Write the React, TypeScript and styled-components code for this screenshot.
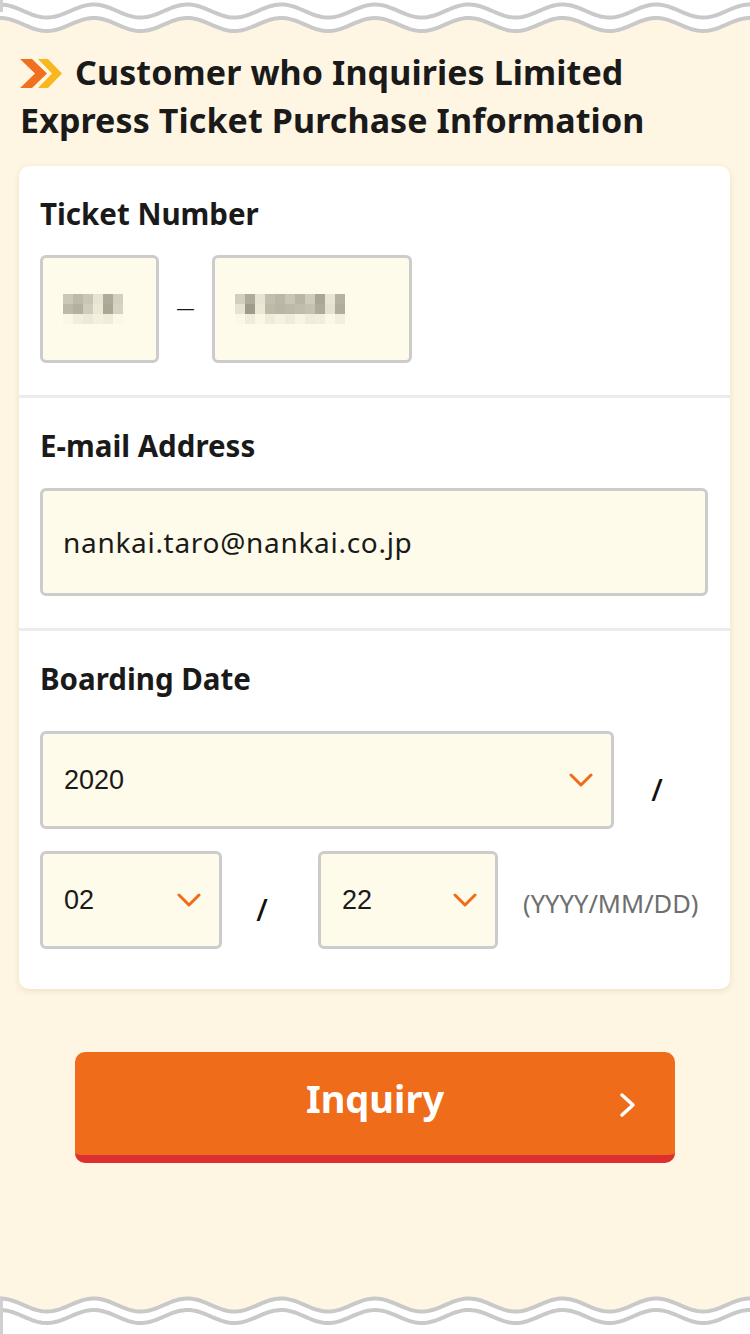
import React from 'react'
import styled, { createGlobalStyle } from 'styled-components'

const CREAM = '#fef6e3'
const ORANGE = '#ee6c1a'
const LINE = '#c9c9c9'

const GlobalStyle = createGlobalStyle`
  html, body {
    margin: 0;
    padding: 0;
    background: ${CREAM};
  }
  body {
    font-family: "Noto Sans", "Noto Sans CJK JP", sans-serif;
    color: #1a1a1a;
  }
`

const Page = styled.div`
  min-height: 1334px;
  display: flex;
  flex-direction: column;
  background: ${CREAM};
`

const WaveSvg = styled.svg<{ $bottom?: boolean }>`
  display: block;
  width: 750px;
  flex-shrink: 0;
  margin-top: ${(p) => (p.$bottom ? 'auto' : '0')};
`

const Title = styled.h1`
  margin: 12px 20px 0 20px;
  font-size: 34px;
  font-weight: 700;
  line-height: 48px;
  letter-spacing: 0.1px;
  color: #1a1a1a;
`

const TitleMark = styled.svg`
  display: inline-block;
  width: 42px;
  height: 29px;
  margin-right: 13px;
  vertical-align: -3px;
`

const Card = styled.div`
  margin: 22px 20px 0 19px;
  background: #fff;
  border-radius: 10px;
  box-shadow: 0 2px 6px rgba(190, 160, 100, 0.25);
`

const Section = styled.div<{ $last?: boolean }>`
  padding: 33px 22px ${(p) => (p.$last ? '40px' : '32px')} 21px;
  border-bottom: ${(p) => (p.$last ? 'none' : '3px solid #ececec')};
`

const Label = styled.div<{ $gap?: number }>`
  font-size: 29.5px;
  font-weight: 700;
  line-height: 30px;
  margin-bottom: ${(p) => p.$gap ?? 26}px;
`

const Row = styled.div<{ $gap?: number }>`
  display: flex;
  align-items: center;
  margin-top: ${(p) => p.$gap ?? 0}px;
`

const Field = styled.div<{ $w?: number; $h?: number }>`
  box-sizing: border-box;
  width: ${(p) => (p.$w ? `${p.$w}px` : '100%')};
  height: ${(p) => p.$h ?? 108}px;
  background: #fffbea;
  border: 3px solid #cccccc;
  border-radius: 6px;
  display: flex;
  align-items: center;
  padding: 0 18px 0 20px;
  flex-shrink: 0;
`

const FieldText = styled.span`
  font-size: 28px;
  color: #1a1a1a;
  letter-spacing: 0.7px;
`

const SelectText = styled.span`
  flex: 1;
  font-family: "Liberation Sans", Arial, sans-serif;
  font-size: 27px;
  color: #1a1a1a;
`

const Dash = styled.span`
  width: 53px;
  text-align: center;
  font-family: "Liberation Sans", Arial, sans-serif;
  font-size: 17px;
  color: #1a1a1a;
`

const Slash = styled.span<{ $w: number; $shift?: number }>`
  width: ${(p) => p.$w}px;
  text-align: center;
  padding-top: 18px;
  padding-right: ${(p) => p.$shift ?? 0}px;
  box-sizing: border-box;
  font-size: 30px;
  font-weight: 500;
  color: #111;
  flex-shrink: 0;
`

const Hint = styled.span`
  margin-left: 25px;
  padding-top: 6px;
  font-size: 25.5px;
  color: #6e6e6e;
  white-space: nowrap;
`

const Chevron = styled.svg`
  width: 24px;
  height: 14px;
  flex-shrink: 0;
`

const Button = styled.button`
  box-sizing: border-box;
  display: grid;
  grid-template-columns: 1fr auto 1fr;
  align-items: center;
  width: 600px;
  height: 111px;
  margin: 63px auto 0 auto;
  padding: 0 38px 12px 38px;
  background: ${ORANGE};
  border: none;
  border-bottom: 8px solid #dd2f2f;
  border-radius: 10px;
  color: #fff;
  font-family: "Noto Sans", sans-serif;
  font-size: 38px;
  font-weight: 700;
  cursor: pointer;
`

const ButtonArrow = styled.svg`
  justify-self: end;
  width: 18px;
  height: 26px;
  margin-top: 14px;
`

const wavePath = (c: number, a: number) => {
  const pts: string[] = []
  for (let x = -2; x <= 752; x += 2) {
    const y = c - a * Math.cos((2 * Math.PI * x) / 93.75)
    pts.push(`${x},${y.toFixed(2)}`)
  }
  return pts
}

const TopWave = () => {
  const l1 = wavePath(11, 6.5)
  const l2 = wavePath(24.5, 6.5)
  return (
    <WaveSvg viewBox="0 0 750 36" height={36}>
      <rect x={0} y={0} width={750} height={36} fill="#fff" />
      <path d={`M${l2.join(' L')} L752,36 L-2,36 Z`} fill={CREAM} />
      <path d={`M${l1.join(' L')}`} fill="none" stroke={LINE} strokeWidth={4} />
      <path d={`M${l2.join(' L')}`} fill="none" stroke={LINE} strokeWidth={4} />
      <rect x={0} y={0} width={3} height={12} fill="#d0d0d0" />
    </WaveSvg>
  )
}

const BottomWave = () => {
  const l1 = wavePath(15, 6.5)
  const l2 = wavePath(26.5, 6.5)
  return (
    <WaveSvg $bottom viewBox="0 0 750 44" height={44}>
      <rect x={0} y={0} width={750} height={44} fill="#fff" />
      <path d={`M-2,0 L752,0 L${[...l1].reverse().join(' L')} Z`} fill={CREAM} />
      <path d={`M${l1.join(' L')}`} fill="none" stroke={LINE} strokeWidth={4} />
      <path d={`M${l2.join(' L')}`} fill="none" stroke={LINE} strokeWidth={4} />
      <rect x={0} y={8} width={3} height={36} fill="#d0d0d0" />
    </WaveSvg>
  )
}

// censored ticket number, drawn as a mosaic
const Mosaic = ({ rows }: { rows: string[][] }) => (
  <svg width={rows[0].length * 10} height={rows.length * 10} style={{ display: 'block' }}>
    {rows.map((r, y) =>
      r.map((c, x) => <rect key={`${x}-${y}`} x={x * 10} y={y * 10} width={10} height={10} fill={c} />)
    )}
  </svg>
)

const mosaicA = [
  ['#cbc8b8', '#bdbaa9', '#c9c6b5', '#e7e4d3', '#aeab9b', '#d3d0bf'],
  ['#bcb9a8', '#b3b09f', '#cfccbb', '#ebe8d6', '#aaa797', '#d6d3c2'],
  ['#fbf7e6', '#f1eedc', '#ede9d8', '#f3f0de', '#efecda', '#fbf8e7'],
]

const mosaicB = [
  ['#d2cfbe', '#aeab9b', '#e7e4d3', '#c2bfae', '#bab7a6', '#c9c6b5', '#b9b6a5', '#cfccbb', '#a9a696', '#e8e5d4', '#b5b2a2'],
  ['#e6e3d2', '#9e9b8b', '#ebe8d6', '#bdbaa9', '#b8b5a4', '#bcb9a8', '#c0bdac', '#c5c2b1', '#aeab9b', '#e4e1d0', '#b0ad9d'],
  ['#fcf8e7', '#f0ecdb', '#fbf7e6', '#efecda', '#f6f2e1', '#f0ecdb', '#f8f4e3', '#efecda', '#f2eedd', '#fcf8e7', '#f3efde'],
]

const SelectChevron = () => (
  <Chevron viewBox="0 0 24 14">
    <polyline points="2,2 12,12 22,2" fill="none" stroke={ORANGE} strokeWidth={3} strokeLinecap="round" strokeLinejoin="round" />
  </Chevron>
)

const DateSelect = ({ value, width }: { value: string; width: number }) => (
  <Field $w={width} $h={98} style={{ paddingLeft: 21 }}>
    <SelectText>{value}</SelectText>
    <SelectChevron />
  </Field>
)

export default function App() {
  return (
    <Page>
      <GlobalStyle />
      <TopWave />
      <Title>
        <TitleMark viewBox="0 0 42 29">
          <polygon points="0,0 12,0 27,14.5 12,29 0,29 15,14.5" fill="#f07020" />
          <polygon points="18,0 28,0 42,14.5 28,29 18,29 32,14.5" fill="#f8b71e" />
        </TitleMark>
        Customer who Inquiries Limited Express Ticket Purchase Information
      </Title>

      <Card>
        <Section>
          <Label>Ticket Number</Label>
          <Row>
            <Field $w={119}>
              <Mosaic rows={mosaicA} />
            </Field>
            <Dash>—</Dash>
            <Field $w={200}>
              <Mosaic rows={mosaicB} />
            </Field>
          </Row>
        </Section>

        <Section>
          <Label $gap={27}>E-mail Address</Label>
          <Field>
            <FieldText>nankai.taro@nankai.co.jp</FieldText>
          </Field>
        </Section>

        <Section $last>
          <Label $gap={37}>Boarding Date</Label>
          <Row>
            <DateSelect value="2020" width={574} />
            <Slash $w={94} $shift={8}>/</Slash>
          </Row>
          <Row $gap={22}>
            <DateSelect value="02" width={182} />
            <Slash $w={96} $shift={16}>/</Slash>
            <DateSelect value="22" width={180} />
            <Hint>(YYYY/MM/DD)</Hint>
          </Row>
        </Section>
      </Card>

      <Button type="button">
        <span />
        <span>Inquiry</span>
        <ButtonArrow viewBox="0 0 18 26">
          <polyline points="3,3 14,13 3,23" fill="none" stroke="#fff" strokeWidth={3.5} strokeLinecap="round" strokeLinejoin="round" />
        </ButtonArrow>
      </Button>

      <BottomWave />
    </Page>
  )
}
